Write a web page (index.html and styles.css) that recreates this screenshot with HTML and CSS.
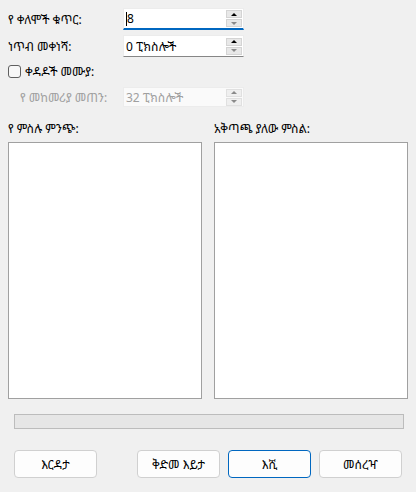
FILE: index.html
```html
<!DOCTYPE html>
<html>
<head>
<meta charset="utf-8">
<link rel="stylesheet" href="styles.css">
</head>
<body>
<div class="dlg">
  <div class="form">
    <div class="row r1">
      <span class="lbl">የ ቀለሞች ቁጥር:</span>
      <div class="spin focus">
        <span class="val"><span class="caret"></span>8</span>
        <div class="arrows"><span class="ab up"><span class="tri-up"></span></span><span class="ab dn"><span class="tri-dn"></span></span></div>
      </div>
    </div>
    <div class="row r2">
      <span class="lbl">ነጥብ መቀነሻ:</span>
      <div class="spin">
        <span class="val">0 ፒክስሎች</span>
        <div class="arrows"><span class="ab up"><span class="tri-up"></span></span><span class="ab dn"><span class="tri-dn"></span></span></div>
      </div>
    </div>
    <div class="row r3">
      <span class="chk"></span>
      <span class="lbl chk-lbl">ቀዳዶች መሙያ:</span>
    </div>
    <div class="row r4">
      <span class="lbl sub">የ መከመሪያ መጠን:</span>
      <div class="spin disabled">
        <span class="val">32 ፒክስሎች</span>
        <div class="arrows"><span class="ab up"><span class="tri-up"></span></span><span class="ab dn"><span class="tri-dn"></span></span></div>
      </div>
    </div>
  </div>
  <div class="lists">
    <div class="col">
      <div class="col-lbl">የ ምስሉ ምንጭ:</div>
      <div class="box"></div>
    </div>
    <div class="col">
      <div class="col-lbl">አቅጣጫ ያለው ምስል:</div>
      <div class="box"></div>
    </div>
  </div>
  <div class="progress"></div>
  <div class="buttons">
    <button class="btn">እርዳታ</button>
    <span class="spacer"></span>
    <button class="btn">ቅድመ እይታ</button>
    <button class="btn default">እሺ</button>
    <button class="btn">መሰረዣ</button>
  </div>
</div>
</body>
</html>
```

FILE: styles.css
```css
html, body {
  margin: 0;
  padding: 0;
  background: #f0f0f0;
}
body {
  font-family: "Noto Sans Ethiopic", "Noto Sans", "DejaVu Sans", sans-serif;
  font-size: 12px;
  color: #000;
  width: 416px;
  height: 492px;
  overflow: hidden;
}
.dlg {
  padding: 8px;
}
.form {
  display: flex;
  flex-direction: column;
}
.row {
  display: flex;
  align-items: center;
}
.r1 { height: 22px; }
.r2 { height: 22px; margin-top: 5px; }
.r3 { height: 21px; margin-top: 4px; }
.r4 { height: 20px; margin-top: 5px; }
.lbl {
  width: 115px;
  white-space: nowrap;
}
.lbl.sub {
  padding-left: 12px;
  width: 103px;
  color: #a0a0a0;
}
.chk {
  width: 11px;
  height: 11px;
  border: 1px solid #5f5f5f;
  border-radius: 3px;
  background: #f7f7f7;
  margin-right: 4px;
}
.chk-lbl { width: auto; }
.spin {
  width: 121px;
  height: 100%;
  box-sizing: border-box;
  background: #fff;
  border: 1px solid #ececec;
  border-bottom: 1px solid #868686;
  display: flex;
  align-items: center;
  justify-content: space-between;
  padding-left: 2px;
  padding-right: 1px;
}
.spin.focus {
  border-bottom: 2px solid #0067c0;
}
.spin.disabled {
  background: #fafafa;
  border: 1px solid #ececec;
  color: #a0a0a0;
}
.val {
  display: flex;
  align-items: center;
  white-space: nowrap;
}
.caret {
  width: 1px;
  height: 14px;
  background: #000;
  margin-right: 0;
}
.arrows {
  display: flex;
  flex-direction: column;
  gap: 1px;
}
.ab {
  width: 16px;
  height: 8px;
  box-sizing: border-box;
  background: #e8e8e8;
  border: 1px solid #d4d4d4;
  display: flex;
  align-items: center;
  justify-content: center;
}
.tri-up {
  width: 0;
  height: 0;
  border-left: 3px solid transparent;
  border-right: 3px solid transparent;
  border-bottom: 3px solid #000;
}
.tri-dn {
  width: 0;
  height: 0;
  border-left: 3px solid transparent;
  border-right: 3px solid transparent;
  border-top: 3px solid #8a8a8a;
}
.disabled .tri-up { border-bottom-color: #8a8a8a; }
.disabled .ab { background: #efefef; border-color: #e0e0e0; }
.lists {
  display: flex;
  gap: 12px;
  margin-top: 14px;
}
.col {
  width: 194px;
  display: flex;
  flex-direction: column;
}
.col-lbl {
  height: 16px;
  line-height: 16px;
  white-space: nowrap;
}
.box {
  margin-top: 5px;
  height: 257px;
  box-sizing: border-box;
  background: #fff;
  border: 1px solid #a0a0a0;
}
.progress {
  margin: 15px 4px 0 6px;
  height: 15px;
  box-sizing: border-box;
  background: #e6e6e6;
  border: 1px solid #bcbcbc;
}
.buttons {
  display: flex;
  gap: 8px;
  margin: 21px 6px 0;
}
.spacer { flex: 1; }
.btn {
  width: 83px;
  height: 28px;
  box-sizing: border-box;
  font: inherit;
  color: #000;
  background: #fdfdfd;
  border: 1px solid #d0d0d0;
  border-radius: 4px;
  padding: 0;
}
.btn.default {
  border-color: #0067c0;
}
```
